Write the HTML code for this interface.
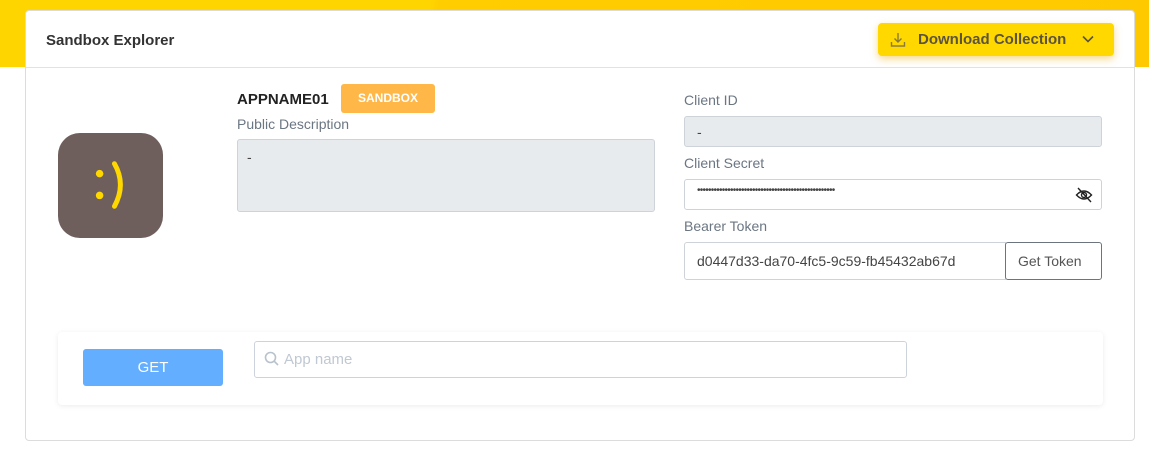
<!DOCTYPE html>
<html><head><meta charset="utf-8"><style>
*{box-sizing:border-box;margin:0;padding:0}
body{width:1149px;height:469px;background:#fff;font-family:"Liberation Sans",sans-serif;position:relative;overflow:hidden;color:#333}
.band{position:absolute;left:0;top:0;width:1149px;height:67px;background:linear-gradient(100deg,#ffd500 0%,#ffd500 37%,#ffcd00 38%,#ffc900 100%)}
.card{position:absolute;left:25px;top:10px;width:1110px;height:431px;background:#fff;border:1px solid #dcdcdc;border-radius:4px}
.hdr{position:absolute;left:0;top:0;width:100%;height:57px;border-bottom:1px solid #e2e2e2}
.title{position:absolute;left:20px;top:21px;font-size:15px;font-weight:bold;color:#333}
.dl{position:absolute;left:852px;top:12px;width:236px;height:33px;background:#ffd800;border-radius:4px;box-shadow:0 3px 8px rgba(240,170,0,.45);font-size:15px;font-weight:bold;color:#5a5340}
.dl span{position:absolute;left:40px;top:8px}
.abs{position:absolute}
.lbl{font-size:14px;color:#6b7683}
.inp{position:absolute;border:1px solid #cdd3d9;border-radius:3px;font-size:14px;color:#444}
</style></head><body>
<div class="band"></div>
<div class="card">
 <div class="hdr">
  <div class="title">Sandbox Explorer</div>
  <div class="dl">
   <svg class="abs" style="left:12px;top:9px" width="16" height="16" viewBox="0 0 16 16" fill="none" stroke="#8a7a3a" stroke-width="1.4"><path d="M8 1v9M4.5 6.5 8 10l3.5-3.5M1.5 10v4h13v-4"/></svg>
   <span>Download Collection</span>
   <svg class="abs" style="left:204px;top:11px" width="12" height="10" viewBox="0 0 12 10" fill="none" stroke="#5a5340" stroke-width="1.6"><path d="M1 2.5 6 7.5 11 2.5"/></svg>
  </div>
 </div>
 <div class="abs" style="left:32px;top:122px;width:105px;height:105px;background:#6e5e5c;border-radius:22px">
  <svg width="105" height="105" viewBox="0 0 106 106"><circle cx="42" cy="41" r="3.8" fill="#ffd800"/><circle cx="42" cy="63" r="3.8" fill="#ffd800"/><path d="M57 31Q69 52 57 74" stroke="#ffd800" stroke-width="5" fill="none" stroke-linecap="round"/></svg>
 </div>
 <div class="abs" style="left:211px;top:80px;font-size:15px;font-weight:bold;color:#222">APPNAME01</div>
 <div class="abs" style="left:315px;top:73px;width:94px;height:29px;background:#ffb847;border-radius:3px;color:#fff;font-size:12px;font-weight:bold;text-align:center;line-height:29px">SANDBOX</div>
 <div class="abs lbl" style="left:211px;top:105px">Public Description</div>
 <div class="inp" style="left:211px;top:128px;width:418px;height:73px;background:#e8ebee;padding:9px 9px">-</div>
 <div class="abs lbl" style="left:658px;top:81px">Client ID</div>
 <div class="inp" style="left:658px;top:105px;width:418px;height:31px;background:#e8ebee;padding:7px 12px">-</div>
 <div class="abs lbl" style="left:658px;top:144px">Client Secret</div>
 <div class="inp" style="left:658px;top:168px;width:418px;height:31px;padding:5px 12px;font-size:10px;letter-spacing:-0.75px">••••••••••••••••••••••••••••••••••••••••••••••••••</div>
 <svg class="abs" style="left:1049px;top:176px" width="18" height="16" viewBox="0 0 18 16" fill="none" stroke="#222" stroke-width="1.4"><path d="M1.5 8Q9 0 16.5 8Q9 16 1.5 8Z"/><circle cx="9" cy="8" r="2.5"/><path d="M3 1l13 14"/></svg>
 <div class="abs lbl" style="left:658px;top:207px">Bearer Token</div>
 <div class="inp" style="left:658px;top:231px;width:322px;height:38px;padding:10px 12px;border-radius:3px 0 0 3px">d0447d33-da70-4fc5-9c59-fb45432ab67d</div>
 <div class="inp" style="left:979px;top:231px;width:97px;height:38px;border-color:#6c757d;padding:10px 12px;color:#555">Get Token</div>
 <div class="abs" style="left:32px;top:321px;width:1045px;height:73px;background:#fff;border-radius:4px;box-shadow:0 1px 6px rgba(0,0,0,.08)">
  <div class="abs" style="left:25px;top:17px;width:140px;height:37px;background:#63aeff;border-radius:3px;color:#fff;font-size:15px;text-align:center;line-height:37px">GET</div>
  <div class="abs" style="left:196px;top:9px;width:653px;height:37px;border:1px solid #cdd3dc;border-radius:3px">
   <svg class="abs" style="left:9px;top:9px" width="16" height="16" viewBox="0 0 16 16" fill="none" stroke="#b8c2cc" stroke-width="1.6"><circle cx="6.5" cy="6.5" r="5"/><path d="M10.3 10.3 14 14"/></svg>
   <span class="abs" style="left:29px;top:9px;font-size:15px;color:#c0c8d2">App name</span>
  </div>
 </div>
</div>
</body></html>
